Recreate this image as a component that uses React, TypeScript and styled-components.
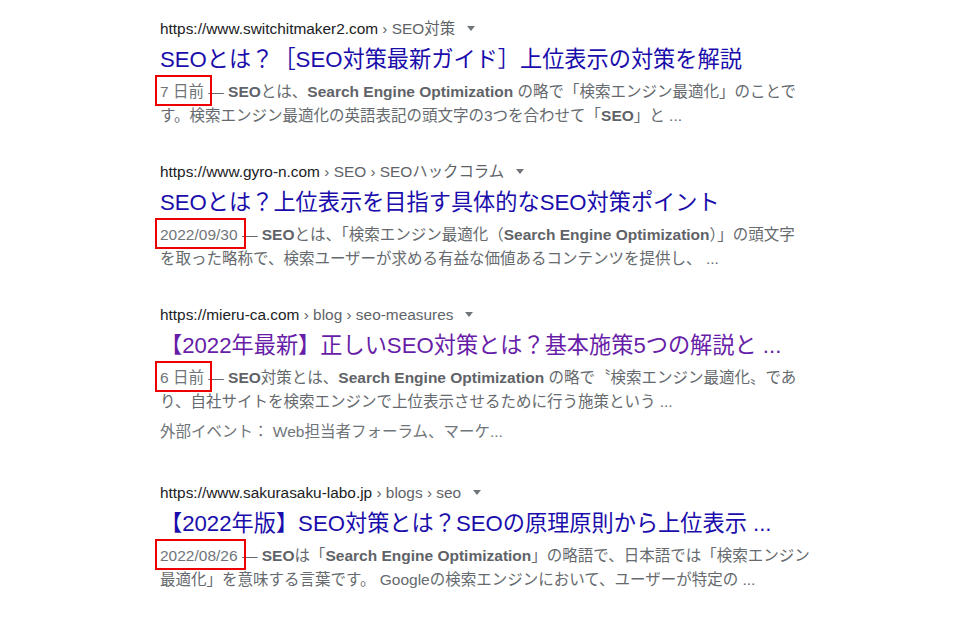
import React from 'react';
import styled, { createGlobalStyle } from 'styled-components';

const GlobalStyle = createGlobalStyle`
  html, body {
    margin: 0;
    padding: 0;
    background: #ffffff;
  }
  body {
    font-family: "Liberation Sans", Arial, "Noto Sans CJK JP", sans-serif;
  }
`;

const Page = styled.div`
  display: flex;
  flex-direction: column;
  gap: 33px;
  padding: 18px 0 0 160px;
`;

const Result = styled.div`
  display: flex;
  flex-direction: column;
`;

const UrlRow = styled.div`
  height: 22px;
  line-height: 22px;
  font-size: 15.4px;
  color: #5f6368;
  white-space: nowrap;
`;

const Host = styled.span`
  color: #202124;
`;

const Crumbs = styled.span`
  color: #5f6368;
`;

const Caret = styled.span`
  display: inline-block;
  vertical-align: middle;
  width: 0;
  height: 0;
  margin-left: 12px;
  margin-top: -2px;
  border-left: 4px solid transparent;
  border-right: 4px solid transparent;
  border-top: 5px solid #70757a;
`;

const Title = styled.a<{ $visited?: boolean }>`
  display: block;
  margin-top: 5px;
  font-size: 22.2px;
  line-height: 30px;
  color: ${(p) => (p.$visited ? '#681da8' : '#1a0dab')};
  text-decoration: none;
  white-space: nowrap;
`;

const Snippet = styled.div`
  margin-top: 5px;
  font-size: 15.5px;
  line-height: 24px;
  color: #666a6e;
`;

const Line = styled.div`
  white-space: nowrap;
`;

const Extra = styled.div`
  margin-top: 6px;
  margin-bottom: 5px;
  font-size: 15.5px;
  line-height: 24px;
  color: #70757a;
  white-space: nowrap;
`;

const DateMark = styled.span`
  position: relative;
  color: #70757a;

  &::after {
    content: '';
    position: absolute;
    left: -5px;
    right: -8px;
    top: -8px;
    bottom: -6px;
    border: 2px solid #ee0000;
  }
`;

const Strong = styled.b`
  font-weight: 700;
  color: #5f6368;
`;

type Item = {
  host: string;
  crumbs: string;
  title: string;
  visited?: boolean;
  date: string;
  lines: React.ReactNode[];
  extra?: string;
};

const items: Item[] = [
  {
    host: 'https://www.switchitmaker2.com',
    crumbs: ' › SEO対策',
    title: 'SEOとは？［SEO対策最新ガイド］上位表示の対策を解説',
    date: '7 日前',
    lines: [
      <>
        {' — '}
        <Strong>SEO</Strong>とは、<Strong>Search Engine Optimization</Strong> の略で「検索エンジン最適化」のことで
      </>,
      <>
        す。検索エンジン最適化の英語表記の頭文字の3つを合わせて「<Strong>SEO</Strong>」と ...
      </>,
    ],
  },
  {
    host: 'https://www.gyro-n.com',
    crumbs: ' › SEO › SEOハックコラム',
    title: 'SEOとは？上位表示を目指す具体的なSEO対策ポイント',
    date: '2022/09/30',
    lines: [
      <>
        {' — '}
        <Strong>SEO</Strong>とは、「検索エンジン最適化（<Strong>Search Engine Optimization</Strong>）」の頭文字
      </>,
      <>を取った略称で、検索ユーザーが求める有益な価値あるコンテンツを提供し、 ...</>,
    ],
  },
  {
    host: 'https://mieru-ca.com',
    crumbs: ' › blog › seo-measures',
    title: '【2022年最新】正しいSEO対策とは？基本施策5つの解説と ...',
    visited: true,
    date: '6 日前',
    lines: [
      <>
        {' — '}
        <Strong>SEO</Strong>対策とは、<Strong>Search Engine Optimization</Strong> の略で〝検索エンジン最適化〟であ
      </>,
      <>り、自社サイトを検索エンジンで上位表示させるために行う施策という ...</>,
    ],
    extra: '外部イベント： Web担当者フォーラム、マーケ...',
  },
  {
    host: 'https://www.sakurasaku-labo.jp',
    crumbs: ' › blogs › seo',
    title: '【2022年版】SEO対策とは？SEOの原理原則から上位表示 ...',
    date: '2022/08/26',
    lines: [
      <>
        {' — '}
        <Strong>SEO</Strong>は「<Strong>Search Engine Optimization</Strong>」の略語で、日本語では「検索エンジン
      </>,
      <>最適化」を意味する言葉です。 Googleの検索エンジンにおいて、ユーザーが特定の ...</>,
    ],
  },
];

const App: React.FC = () => {
  return (
    <>
      <GlobalStyle />
      <Page>
        {items.map((item) => (
          <Result key={item.host}>
            <UrlRow>
              <Host>{item.host}</Host>
              <Crumbs>{item.crumbs}</Crumbs>
              <Caret />
            </UrlRow>
            <Title href="#" $visited={item.visited}>
              {item.title}
            </Title>
            <Snippet>
              <Line>
                <DateMark>{item.date}</DateMark>
                {item.lines[0]}
              </Line>
              <Line>{item.lines[1]}</Line>
            </Snippet>
            {item.extra && <Extra>{item.extra}</Extra>}
          </Result>
        ))}
      </Page>
    </>
  );
};

export default App;
